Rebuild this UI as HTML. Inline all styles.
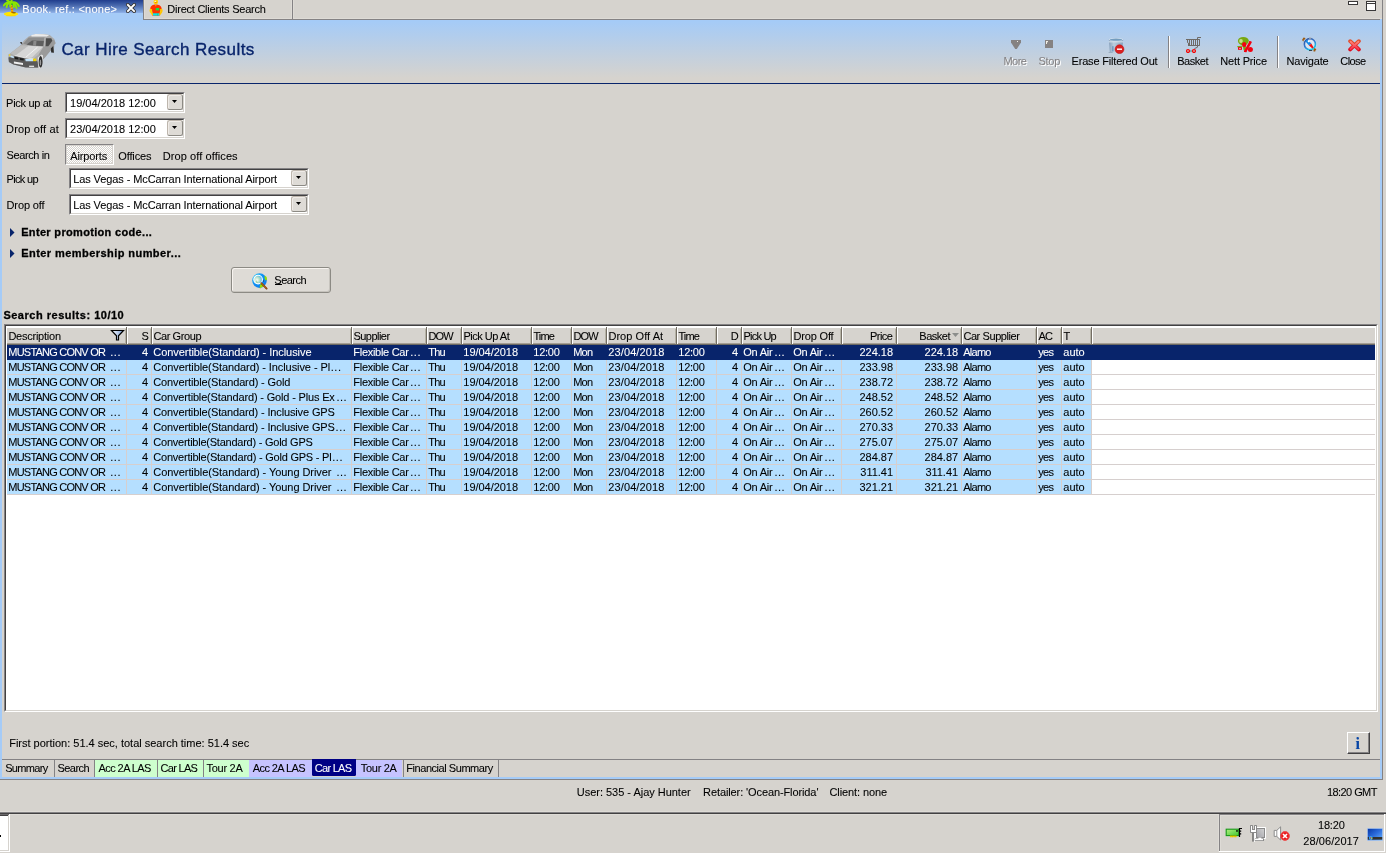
<!DOCTYPE html>
<html><head><meta charset="utf-8"><title>Car Hire Search Results</title>
<style>
html,body{margin:0;padding:0}
body{width:1386px;height:853px;background:#D6D3CE;position:relative;overflow:hidden;font-family:'Liberation Sans',sans-serif;font-size:11px}
div,span,svg{position:absolute;display:block}
span{white-space:pre;-webkit-text-stroke:0.08px}
</style></head>
<body>
<div style="left:0px;top:0px;width:143px;height:20px;background:linear-gradient(#213C8C 0px,#31519C 2.5px,#4A69AD 5.5px,#6386C6 8.5px,#7B9ED6 11px,#8CAEE7 12.6px,#A5CBF7 13.2px);"></div>
<div style="left:144px;top:18px;width:1238px;height:1px;background:#DEDBD6;"></div>
<div style="left:144px;top:0px;width:1px;height:18px;background:#DEDBD6;"></div>
<div style="left:291px;top:0px;width:1px;height:18px;background:#DEDBD6;"></div>
<div style="left:293px;top:0px;width:1px;height:18px;background:#DEDBD6;"></div>
<div style="left:143px;top:0px;width:1px;height:20px;background:#848284;"></div>
<div style="left:144px;top:19px;width:1239px;height:1px;background:#848284;"></div>
<div style="left:292px;top:0px;width:1px;height:19px;background:#848284;"></div>
<svg style="left:3px;top:0px" width="17" height="17" viewBox="0 0 17 17">
<ellipse cx="8" cy="14" rx="7.2" ry="2.2" fill="#FFE600"/>
<rect x="3.3" y="14.8" width="9.2" height="1.4" fill="#FFD800"/>
<path d="M7.6 3.5C8.2 7 9.4 9 9.2 13" stroke="#F6B000" stroke-width="2.3" fill="none"/>
<path d="M7.6 3.5C8.2 7 9.4 9 9.2 13" stroke="#C85A00" stroke-width="2.3" fill="none" stroke-dasharray="1.1 1.7" opacity="0.75"/>
<ellipse cx="11" cy="12.7" rx="2" ry="0.8" fill="#7A4A00" opacity="0.8"/>
<g stroke="#8CE600" stroke-width="2" fill="none" stroke-linecap="round">
<path d="M8 2.6C5.5 1.6 2.5 3 0.8 5.5"/>
<path d="M8 2.6C5.5 2.6 4 4.5 3.6 7.2"/>
<path d="M8 2.6C7 4 7 5.5 7.2 6.6"/>
<path d="M8 2.6C10.5 3 11 5.5 10.8 7"/>
<path d="M8 2.6C11 2.5 13 5 13.5 8.2"/>
<path d="M8 2.6C11.5 1.6 14.5 3.4 15.8 6"/>
<path d="M8 2.6L4.2 0.4"/><path d="M8 2.6L8.6 0.4"/>
</g>
<circle cx="9" cy="4.2" r="0.9" fill="#30C020"/>
</svg>
<svg style="left:126px;top:3px" width="10" height="10" viewBox="0 0 10 10">
<path d="M1.8 1.8L8.2 8.2M8.2 1.8L1.8 8.2" stroke="#303030" stroke-width="3.6" stroke-linecap="square" fill="none"/>
<path d="M1.9 1.9L8.1 8.1M8.1 1.9L1.9 8.1" stroke="#fff" stroke-width="1.9" stroke-linecap="square" fill="none"/>
</svg>
<svg style="left:149px;top:0px" width="15" height="17" viewBox="0 0 15 17">
<path d="M5.4 0L6.6 0L7.2 1L7.8 0L8.4 0L8 1.2z" fill="#F8A000"/>
<circle cx="6.8" cy="1.9" r="2.3" fill="#FFD400"/>
<ellipse cx="6.9" cy="2.4" rx="1" ry="0.6" fill="#FF8000"/>
<ellipse cx="6.3" cy="1.2" rx="0.9" ry="0.5" fill="#fff"/>
<path d="M1.2 9.5C1 6.5 3.5 4.8 5.8 4.6L7.8 4.6C10.5 4.8 12.8 6.5 12.8 9.5L11 11L10.6 15.8L3.4 15.8L3.2 11z" fill="#FF3400"/>
<path d="M1.4 8.6C0.2 9.8 0.4 11 1 12.2L3.2 15.4L4 14.2L3 11.4L3.2 9.4z" fill="#FFD400"/>
<path d="M12.6 8.6C14 9.8 13.8 11 13.2 12.2L11 15.4L10.2 14.2L11.2 11.4L11 9.4z" fill="#FFC400"/>
<path d="M6.4 4.6L7.4 4.6L7.2 6.2L6.6 6.2z" fill="#FFD400"/>
<rect x="6.8" y="8" width="3.4" height="2.4" fill="#18E040"/>
<rect x="4" y="13.3" width="6.2" height="2.3" fill="#00E8E8"/>
<rect x="8.3" y="13.3" width="0.6" height="2.3" fill="#20C080"/>
</svg>
<div style="left:1348px;top:1px;width:10px;height:4px;box-sizing:border-box;background:#fff;border:1px solid #393839;"></div>
<div style="left:1366px;top:1px;width:10px;height:10px;box-sizing:border-box;background:#fff;border:1px solid #393839;"></div>
<div style="left:1367px;top:3px;width:8px;height:1px;background:#393839;"></div>
<div style="left:1382px;top:0px;width:1px;height:780px;background:#848284;"></div>
<div style="left:0px;top:779px;width:1383px;height:1px;background:#848284;"></div>
<div style="left:2px;top:20px;width:1378px;height:63px;background:linear-gradient(#A5CBF7 0%,#A5CBF7 2%,#D6D3CE 92%);"></div>
<div style="left:2px;top:83px;width:1378px;height:1px;background:#08246B;"></div>
<div style="left:0px;top:19px;width:2px;height:760px;background:#A5CBF7;"></div>
<div style="left:1380px;top:19px;width:2px;height:760px;background:#A5CBF7;"></div>
<div style="left:0px;top:777px;width:1382px;height:2px;background:#A5CBF7;"></div>
<svg style="left:8px;top:33px" width="48" height="37" viewBox="0 0 48 37">
<defs><linearGradient id="cb" x1="0" y1="0" x2="1" y2="1"><stop offset="0" stop-color="#D2D2D2"/><stop offset="1" stop-color="#8E8E8E"/></linearGradient></defs>
<path d="M0.4 24.6L0.9 29L5.4 31.5L17.7 34.4L30.5 34.9L32 35.9L33.9 31.5L34.9 26.6L36.9 24.6L43.3 16.7L45.8 19.7L46.2 11.8L47.7 10.3L46.2 5.9L41.8 1.9L35.9 1L27.5 0.9L20.6 3.4L15.7 7.8L13.2 11.8L2.4 20.2L0.4 21.6z" fill="#ABABAB"/>
<path d="M23.1 2.2L27.5 0.9L35.9 1.2L41.3 1.9L38.9 3.6L23.6 3.6z" fill="#ECECEC"/>
<path d="M35.4 13.7L46 6.5L47.5 10.3L46.2 11.8L45.8 19.7L43.3 16.7L36.9 24.6L34.9 26.6L30.5 21.6z" fill="#9A9A9A"/>
<path d="M15.2 10.8L20.6 4.6L36.8 4.6L35.4 13.3L21.6 12.3z" fill="#8C8C8C"/>
<path d="M18.5 11.5L24 7.5L35.8 8L35.4 13.3L21.6 12.3z" fill="#5E5E5E"/>
<path d="M25.5 8L28.5 8L28 12.8L25 12.6z" fill="#8A8A8A"/>
<path d="M37.6 5.2L43.3 5.2L44.4 7.8L40.3 13.3L37.4 13.3z" fill="#4C4C4C"/>
<path d="M36.4 4.6L37.8 4.6L37.2 13.6L35.6 13.6z" fill="#B4B4B4"/>
<path d="M2.4 20.2L13.2 12.3L35.4 13.7L30.5 21.6L25.6 25.6L17.7 25.6L6.8 22.8z" fill="#BDBDBD"/>
<path d="M7.5 22.5L20.5 12.8L35 13.7L24 24.5L17.7 25.4z" fill="#D6D6D6"/>
<path d="M17.8 24.2L29.5 14.2" stroke="#F4F4F4" stroke-width="0.9" fill="none"/>
<path d="M6.8 22.6L17.7 25.4L25.6 25.8" stroke="#F0F0F0" stroke-width="0.8" fill="none"/>
<path d="M0.4 24.6L6.8 23.1L17.7 25.6L25.6 26.6L29.5 28.5L30.5 34.6L17.7 34.4L5.4 31.5L0.9 29z" fill="#5A5A5A"/>
<path d="M17.2 26.1L25.1 26.1L25.1 28.2L17.7 28.2z" fill="#C4E4FA"/>
<path d="M2.4 22.4L5.9 23.6L5.9 25.3L2.4 24.3z" fill="#C4E4FA"/>
<path d="M25.1 25.6L28.2 25.6L28.2 28.2L25.1 28.2z" fill="#F2D400"/>
<path d="M0.9 21.1L2.3 21.1L2.3 23.3L0.9 23.3z" fill="#E8D040"/>
<path d="M6.8 24.1L10.3 24.6L10.3 26.6L6.8 26.1z" fill="#1A1A1A"/>
<path d="M11.8 25.1L15.7 25.6L15.7 27.6L11.8 27.1z" fill="#1A1A1A"/>
<path d="M5.9 28.5L15 30L15 32L5.9 30.5z" fill="#F0F0F0"/>
<path d="M21.1 32.7L26.1 32.7L26.1 33.9L21.1 33.9z" fill="#F0F0F0"/>
<path d="M29.8 24.5L33.5 21.5L35 22.5L34.9 26.6L33.9 31.5L32 35.9L30.5 34.9z" fill="#E4E4E4"/>
<ellipse cx="32.6" cy="28.8" rx="1.9" ry="5.8" fill="#2C2C2C"/>
<ellipse cx="32.4" cy="29.4" rx="0.8" ry="3" fill="#9A9A9A"/>
<path d="M42.8 15.6L45.2 13L45.9 19.7L43.2 19.6z" fill="#2E2E2E"/>
<path d="M12 9.1L14 9.1L14.3 11.4L12.8 10.8z" fill="#444"/>
</svg>
<div style="left:1168px;top:36px;width:1px;height:32px;background:#848284;"></div>
<div style="left:1169px;top:36px;width:1px;height:32px;background:#fff;"></div>
<div style="left:1277px;top:36px;width:1px;height:32px;background:#848284;"></div>
<div style="left:1278px;top:36px;width:1px;height:32px;background:#fff;"></div>
<svg style="left:1011px;top:40px" width="10" height="9" viewBox="0 0 10 9">
<path d="M0 0h10v2.6L5.8 9H4.2L0 2.6z" fill="#858282"/>
<rect x="6" y="1" width="1" height="1" fill="#F0EEE6"/>
</svg>
<svg style="left:1045px;top:40px" width="8" height="8" viewBox="0 0 8 8">
<rect width="8" height="8" fill="#858282"/>
<path d="M1 1h2v1.2h-1V4H1z" fill="#F0EEE6"/>
</svg>
<svg style="left:1108px;top:38px" width="17" height="16" viewBox="0 0 17 16">
<defs><linearGradient id="bk" x1="0" y1="0" x2="1" y2="0"><stop offset="0" stop-color="#869FBA"/><stop offset="0.35" stop-color="#BCCEDE"/><stop offset="1" stop-color="#86A2BE"/></linearGradient></defs>
<path d="M0.8 1.6L15.2 1.6L14.2 14.6L1.8 14.6z" fill="url(#bk)"/>
<path d="M0.8 3.2h14.4v1.2H0.8z" fill="#D6E2EC" opacity="0.9"/>
<ellipse cx="8" cy="1.6" rx="7.2" ry="1.6" fill="#D5E3F0"/>
<ellipse cx="8" cy="1.7" rx="6.2" ry="1.15" fill="#739CBE"/>
<rect x="4.4" y="8.2" width="1" height="5.2" fill="#4F86B8"/>
<rect x="0.6" y="14" width="4" height="1" fill="#9AAFC2"/>
<circle cx="11.5" cy="11.2" r="4.4" fill="#DC2020"/>
<circle cx="11.5" cy="11.2" r="4.4" fill="none" stroke="#B81414" stroke-width="0.6"/>
<rect x="9" y="10.5" width="5" height="1.4" fill="#fff"/>
</svg>
<svg style="left:1185px;top:36px" width="17" height="17" viewBox="0 0 17 17">
<g stroke="#6E6A66" stroke-width="1" fill="none">
<path d="M16 1.5H12.5V11.2L9.4 12.6"/>
<path d="M1 3.5H14.8"/>
<path d="M3 9.5H14.8"/>
<path d="M2.5 3.5V6.8M4.5 3.5V9.5M6.5 3.5V9.5M8.5 3.5V9.5M10.5 3.5V9.5M14.5 3.5V9.5"/>
<path d="M3.5 6.8V9.5"/>
</g>
<path d="M3 15h6" stroke="#409090" stroke-width="1"/>
<circle cx="3" cy="15" r="1.45" fill="#C8F8F8" stroke="#F40000" stroke-width="1.25"/>
<circle cx="9" cy="15" r="1.45" fill="#C8F8F8" stroke="#F40000" stroke-width="1.25"/>
</svg>
<svg style="left:1237px;top:36px" width="17" height="17" viewBox="0 0 17 17">
<ellipse cx="6.3" cy="5" rx="5.4" ry="4.1" fill="#78A810"/>
<path d="M9 3.2L12 4.6L9.6 6.2z" fill="#78A810"/>
<ellipse cx="4" cy="5" rx="1.8" ry="2" fill="#C4E08C"/>
<path d="M5.5 8L6.6 14.2L9 13.6L8.6 8z" fill="#78A810"/>
<path d="M0.2 10.2L5.6 9.6L5.6 10.8L0.2 11.2z" fill="#78A810"/>
<rect x="1" y="11.1" width="4" height="2.7" fill="#F20010"/>
<rect x="2" y="12.1" width="2" height="0.7" fill="#F8C8C8"/>
<ellipse cx="7.2" cy="8.6" rx="2.2" ry="2.5" fill="#F20010"/>
<ellipse cx="13.4" cy="13.4" rx="2.5" ry="2.5" fill="#F20010"/>
<path d="M13.6 5.8L8 15.9" stroke="#F20010" stroke-width="2.6"/>
<rect x="12" y="5.2" width="2.4" height="1.8" fill="#F20010"/>
<rect x="7" y="14.6" width="2.4" height="1.4" fill="#F20010"/>
</svg>
<svg style="left:1301px;top:36px" width="17" height="17" viewBox="0 0 17 17">
<defs><linearGradient id="nr" x1="0" y1="0" x2="0.6" y2="1"><stop offset="0" stop-color="#2C4C94"/><stop offset="0.55" stop-color="#3478D0"/><stop offset="1" stop-color="#18CCEC"/></linearGradient></defs>
<circle cx="8.9" cy="8.4" r="6.6" fill="#F4F4F6" opacity="0.9"/>
<circle cx="8.9" cy="8.2" r="5.6" fill="#DCE6F0" stroke="url(#nr)" stroke-width="1.7"/>
<path d="M8 1.6h2.2v1.2H8z" fill="#A8A8A8"/>
<path d="M4.3 5.2L6.2 3.7L10.3 7.5L8 9.6z" fill="#1088E8"/>
<path d="M10.3 7.5L8 9.6L11.4 12.6L12.6 11.6z" fill="#F01010"/>
<circle cx="7.6" cy="5.4" r="0.9" fill="#fff"/>
<path d="M1.2 3.6L2.6 1.4L4.4 2L4 3.4L2.8 3.8L2.6 5.4L1.6 5z" fill="#9A5A10"/>
<path d="M12.4 13.6L13.6 12L15.4 13.2L14.6 14.2L14.2 15.6L12.6 15.6z" fill="#9A5A10"/>
<path d="M8 14.2h3.2v0.8H8z" fill="#202028"/>
</svg>
<svg style="left:1348px;top:39px" width="13" height="13" viewBox="0 0 13 13">
<defs><linearGradient id="cx" x1="0" y1="0" x2="0" y2="1"><stop offset="0" stop-color="#E0502E"/><stop offset="1" stop-color="#DE0C1C"/></linearGradient>
<linearGradient id="cy" x1="0" y1="0" x2="0" y2="1"><stop offset="0" stop-color="#FF8478"/><stop offset="1" stop-color="#F8304C"/></linearGradient></defs>
<path d="M2.2 2.2L10.8 10.4M10.8 2.2L2.2 10.4" stroke="url(#cx)" stroke-width="3.9" stroke-linecap="round" fill="none"/>
<path d="M2.6 2.7L10.4 10M10.4 2.7L2.6 10" stroke="url(#cy)" stroke-width="1.9" stroke-linecap="round" fill="none"/>
</svg>
<div style="left:65px;top:92px;width:120px;height:21px;box-sizing:border-box;background:#fff;border:1px solid;border-color:#848284 #fff #fff #848284;"></div>
<div style="left:66px;top:93px;width:118px;height:19px;box-sizing:border-box;border:1px solid;border-color:#424142 #D6D3CE #D6D3CE #424142;"></div>
<div style="left:167px;top:94px;width:16px;height:16px;box-sizing:border-box;background:#DEDBD6;border:1px solid;border-color:#BDB6AD #8C8A84 #8C8A84 #BDB6AD;border-radius:2.5px;box-shadow:inset 1px 1px 0 #EFEBE7;"></div>
<svg style="left:172px;top:100px" width="5" height="3" viewBox="0 0 5 3"><path d="M0 0h5L2.5 3z" fill="#000"/></svg>
<div style="left:65px;top:118px;width:120px;height:21px;box-sizing:border-box;background:#fff;border:1px solid;border-color:#848284 #fff #fff #848284;"></div>
<div style="left:66px;top:119px;width:118px;height:19px;box-sizing:border-box;border:1px solid;border-color:#424142 #D6D3CE #D6D3CE #424142;"></div>
<div style="left:167px;top:120px;width:16px;height:16px;box-sizing:border-box;background:#DEDBD6;border:1px solid;border-color:#BDB6AD #8C8A84 #8C8A84 #BDB6AD;border-radius:2.5px;box-shadow:inset 1px 1px 0 #EFEBE7;"></div>
<svg style="left:172px;top:126px" width="5" height="3" viewBox="0 0 5 3"><path d="M0 0h5L2.5 3z" fill="#000"/></svg>
<div style="left:69px;top:168px;width:240px;height:21px;box-sizing:border-box;background:#fff;border:1px solid;border-color:#848284 #fff #fff #848284;"></div>
<div style="left:70px;top:169px;width:238px;height:19px;box-sizing:border-box;border:1px solid;border-color:#424142 #D6D3CE #D6D3CE #424142;"></div>
<div style="left:291px;top:170px;width:16px;height:16px;box-sizing:border-box;background:#DEDBD6;border:1px solid;border-color:#BDB6AD #8C8A84 #8C8A84 #BDB6AD;border-radius:2.5px;box-shadow:inset 1px 1px 0 #EFEBE7;"></div>
<svg style="left:296px;top:176px" width="5" height="3" viewBox="0 0 5 3"><path d="M0 0h5L2.5 3z" fill="#000"/></svg>
<div style="left:69px;top:194px;width:240px;height:21px;box-sizing:border-box;background:#fff;border:1px solid;border-color:#848284 #fff #fff #848284;"></div>
<div style="left:70px;top:195px;width:238px;height:19px;box-sizing:border-box;border:1px solid;border-color:#424142 #D6D3CE #D6D3CE #424142;"></div>
<div style="left:291px;top:196px;width:16px;height:16px;box-sizing:border-box;background:#DEDBD6;border:1px solid;border-color:#BDB6AD #8C8A84 #8C8A84 #BDB6AD;border-radius:2.5px;box-shadow:inset 1px 1px 0 #EFEBE7;"></div>
<svg style="left:296px;top:202px" width="5" height="3" viewBox="0 0 5 3"><path d="M0 0h5L2.5 3z" fill="#000"/></svg>
<div style="left:65px;top:144px;width:49px;height:21px;box-sizing:border-box;border:1px solid;border-color:#848284 #fff #fff #848284;"></div>
<div style="left:67px;top:146px;width:45px;height:17px;background:conic-gradient(#fff 25%,#D6D3CE 0 50%,#fff 0 75%,#D6D3CE 0) 0 0/2px 2px;"></div>
<svg style="left:10px;top:228px" width="5" height="9" viewBox="0 0 5 9"><path d="M0 0L4.5 4.5L0 9z" fill="#08246B"/></svg>
<svg style="left:10px;top:249px" width="5" height="9" viewBox="0 0 5 9"><path d="M0 0L4.5 4.5L0 9z" fill="#08246B"/></svg>
<div style="left:231px;top:267px;width:100px;height:26px;box-sizing:border-box;border:1px solid #8C8A84;border-radius:3px;background:#DEDBD6;box-shadow:inset 1px 1px 0 #F7F3EF,inset -1px -1px 0 #C6C3BD;"></div>
<svg style="left:252px;top:273px" width="17" height="17" viewBox="0 0 17 17">
<defs><radialGradient id="sg" cx="0.3" cy="0.3" r="0.9"><stop offset="0" stop-color="#30D8FA"/><stop offset="0.5" stop-color="#1090F4"/><stop offset="1" stop-color="#0C70E8"/></radialGradient>
<radialGradient id="sl" cx="0.35" cy="0.55" r="0.7"><stop offset="0" stop-color="#fff"/><stop offset="0.45" stop-color="#B8E0C8"/><stop offset="1" stop-color="#38A8F0"/></radialGradient></defs>
<circle cx="7.5" cy="7.6" r="7.3" fill="url(#sg)"/>
<path d="M12.6 2.6L14.6 4L15 7L13.6 7.6L12.6 5.6z" fill="#98E000"/>
<path d="M8.2 11.6L10.6 10.4L11.6 11.6L10.8 14L8.8 14.6L8.6 15.6L7.6 15.2z" fill="#98E000"/>
<path d="M11.4 6.4L12 8.2L11.4 9z" fill="#101820"/>
<circle cx="6.1" cy="6.6" r="4.3" fill="url(#sl)" stroke="#fff" stroke-width="1.1"/>
<path d="M3.8 5.4L4.6 8.6L6 9.6L4.4 9.4z" fill="#48A848" opacity="0.7"/>
<path d="M9.4 10.2L14.6 15.6" stroke="#7A3A08" stroke-width="1.9" stroke-linecap="round"/>
<path d="M9.6 10.2L14.4 15.2" stroke="#D07828" stroke-width="0.8" stroke-linecap="round"/>
</svg>
<div style="left:275px;top:284px;width:7px;height:1px;background:#000;"></div>
<div style="left:4px;top:324px;width:1374px;height:388px;box-sizing:border-box;background:#fff;border:1px solid;border-color:#848284 #fff #fff #848284;"></div>
<div style="left:5px;top:325px;width:1372px;height:386px;box-sizing:border-box;border:1px solid;border-color:#424142 #D6D3CE #D6D3CE #424142;"></div>
<div style="left:7px;top:328px;width:1368px;height:15px;background:#D6D3CE;"></div>
<div style="left:7px;top:343px;width:1368px;height:1px;background:#A59E94;"></div>
<div style="left:7px;top:344px;width:1368px;height:1px;background:#6B6963;"></div>
<div style="left:125px;top:329px;width:1px;height:15px;background:#B5B2A5;"></div>
<div style="left:126px;top:327px;width:1px;height:18px;background:#736D63;"></div>
<div style="left:127px;top:327px;width:1px;height:17px;background:#fff;"></div>
<div style="left:150px;top:329px;width:1px;height:15px;background:#B5B2A5;"></div>
<div style="left:151px;top:327px;width:1px;height:18px;background:#736D63;"></div>
<div style="left:152px;top:327px;width:1px;height:17px;background:#fff;"></div>
<div style="left:350px;top:329px;width:1px;height:15px;background:#B5B2A5;"></div>
<div style="left:351px;top:327px;width:1px;height:18px;background:#736D63;"></div>
<div style="left:352px;top:327px;width:1px;height:17px;background:#fff;"></div>
<div style="left:425px;top:329px;width:1px;height:15px;background:#B5B2A5;"></div>
<div style="left:426px;top:327px;width:1px;height:18px;background:#736D63;"></div>
<div style="left:427px;top:327px;width:1px;height:17px;background:#fff;"></div>
<div style="left:460px;top:329px;width:1px;height:15px;background:#B5B2A5;"></div>
<div style="left:461px;top:327px;width:1px;height:18px;background:#736D63;"></div>
<div style="left:462px;top:327px;width:1px;height:17px;background:#fff;"></div>
<div style="left:530px;top:329px;width:1px;height:15px;background:#B5B2A5;"></div>
<div style="left:531px;top:327px;width:1px;height:18px;background:#736D63;"></div>
<div style="left:532px;top:327px;width:1px;height:17px;background:#fff;"></div>
<div style="left:570px;top:329px;width:1px;height:15px;background:#B5B2A5;"></div>
<div style="left:571px;top:327px;width:1px;height:18px;background:#736D63;"></div>
<div style="left:572px;top:327px;width:1px;height:17px;background:#fff;"></div>
<div style="left:605px;top:329px;width:1px;height:15px;background:#B5B2A5;"></div>
<div style="left:606px;top:327px;width:1px;height:18px;background:#736D63;"></div>
<div style="left:607px;top:327px;width:1px;height:17px;background:#fff;"></div>
<div style="left:675px;top:329px;width:1px;height:15px;background:#B5B2A5;"></div>
<div style="left:676px;top:327px;width:1px;height:18px;background:#736D63;"></div>
<div style="left:677px;top:327px;width:1px;height:17px;background:#fff;"></div>
<div style="left:715px;top:329px;width:1px;height:15px;background:#B5B2A5;"></div>
<div style="left:716px;top:327px;width:1px;height:18px;background:#736D63;"></div>
<div style="left:717px;top:327px;width:1px;height:17px;background:#fff;"></div>
<div style="left:740px;top:329px;width:1px;height:15px;background:#B5B2A5;"></div>
<div style="left:741px;top:327px;width:1px;height:18px;background:#736D63;"></div>
<div style="left:742px;top:327px;width:1px;height:17px;background:#fff;"></div>
<div style="left:790px;top:329px;width:1px;height:15px;background:#B5B2A5;"></div>
<div style="left:791px;top:327px;width:1px;height:18px;background:#736D63;"></div>
<div style="left:792px;top:327px;width:1px;height:17px;background:#fff;"></div>
<div style="left:840px;top:329px;width:1px;height:15px;background:#B5B2A5;"></div>
<div style="left:841px;top:327px;width:1px;height:18px;background:#736D63;"></div>
<div style="left:842px;top:327px;width:1px;height:17px;background:#fff;"></div>
<div style="left:895px;top:329px;width:1px;height:15px;background:#B5B2A5;"></div>
<div style="left:896px;top:327px;width:1px;height:18px;background:#736D63;"></div>
<div style="left:897px;top:327px;width:1px;height:17px;background:#fff;"></div>
<div style="left:960px;top:329px;width:1px;height:15px;background:#B5B2A5;"></div>
<div style="left:961px;top:327px;width:1px;height:18px;background:#736D63;"></div>
<div style="left:962px;top:327px;width:1px;height:17px;background:#fff;"></div>
<div style="left:1035px;top:329px;width:1px;height:15px;background:#B5B2A5;"></div>
<div style="left:1036px;top:327px;width:1px;height:18px;background:#736D63;"></div>
<div style="left:1037px;top:327px;width:1px;height:17px;background:#fff;"></div>
<div style="left:1060px;top:329px;width:1px;height:15px;background:#B5B2A5;"></div>
<div style="left:1061px;top:327px;width:1px;height:18px;background:#736D63;"></div>
<div style="left:1062px;top:327px;width:1px;height:17px;background:#fff;"></div>
<div style="left:1090px;top:329px;width:1px;height:15px;background:#B5B2A5;"></div>
<div style="left:1091px;top:327px;width:1px;height:18px;background:#736D63;"></div>
<div style="left:1092px;top:327px;width:1px;height:17px;background:#fff;"></div>
<svg style="left:110px;top:329px" width="15" height="12" viewBox="0 0 15 12"><defs><linearGradient id="fg" x1="0" y1="0" x2="1" y2="0"><stop offset="0" stop-color="#fff"/><stop offset="1" stop-color="#7B9ED6"/></linearGradient></defs><path d="M1.5 1.5h12L8.5 6.8v4.2h-2V6.8z" fill="url(#fg)" stroke="#000" stroke-width="1.2" stroke-linejoin="miter"/></svg>
<svg style="left:952px;top:333px" width="7" height="4" viewBox="0 0 7 4"><path d="M0 0h7L3.5 4z" fill="#8C8E8C"/></svg>
<div style="left:7px;top:360px;width:1085px;height:135px;background:#B5DFFF;"></div>
<div style="left:7px;top:374px;width:1368px;height:1px;background:#D6CFCE;"></div>
<div style="left:7px;top:389px;width:1368px;height:1px;background:#D6CFCE;"></div>
<div style="left:7px;top:404px;width:1368px;height:1px;background:#D6CFCE;"></div>
<div style="left:7px;top:419px;width:1368px;height:1px;background:#D6CFCE;"></div>
<div style="left:7px;top:434px;width:1368px;height:1px;background:#D6CFCE;"></div>
<div style="left:7px;top:449px;width:1368px;height:1px;background:#D6CFCE;"></div>
<div style="left:7px;top:464px;width:1368px;height:1px;background:#D6CFCE;"></div>
<div style="left:7px;top:479px;width:1368px;height:1px;background:#D6CFCE;"></div>
<div style="left:7px;top:494px;width:1368px;height:1px;background:#D6CFCE;"></div>
<div style="left:126px;top:360px;width:1px;height:135px;background:#D6CFCE;"></div>
<div style="left:151px;top:360px;width:1px;height:135px;background:#D6CFCE;"></div>
<div style="left:351px;top:360px;width:1px;height:135px;background:#D6CFCE;"></div>
<div style="left:426px;top:360px;width:1px;height:135px;background:#D6CFCE;"></div>
<div style="left:461px;top:360px;width:1px;height:135px;background:#D6CFCE;"></div>
<div style="left:531px;top:360px;width:1px;height:135px;background:#D6CFCE;"></div>
<div style="left:571px;top:360px;width:1px;height:135px;background:#D6CFCE;"></div>
<div style="left:606px;top:360px;width:1px;height:135px;background:#D6CFCE;"></div>
<div style="left:676px;top:360px;width:1px;height:135px;background:#D6CFCE;"></div>
<div style="left:716px;top:360px;width:1px;height:135px;background:#D6CFCE;"></div>
<div style="left:741px;top:360px;width:1px;height:135px;background:#D6CFCE;"></div>
<div style="left:791px;top:360px;width:1px;height:135px;background:#D6CFCE;"></div>
<div style="left:841px;top:360px;width:1px;height:135px;background:#D6CFCE;"></div>
<div style="left:896px;top:360px;width:1px;height:135px;background:#D6CFCE;"></div>
<div style="left:961px;top:360px;width:1px;height:135px;background:#D6CFCE;"></div>
<div style="left:1036px;top:360px;width:1px;height:135px;background:#D6CFCE;"></div>
<div style="left:1061px;top:360px;width:1px;height:135px;background:#D6CFCE;"></div>
<div style="left:1091px;top:360px;width:1px;height:135px;background:#D6CFCE;"></div>
<div style="left:7px;top:345px;width:1368px;height:15px;background:#08246B;"></div>
<div style="left:1347px;top:732px;width:23px;height:22px;box-sizing:border-box;background:#D6D3CE;border:1px solid;border-color:#fff #424142 #424142 #fff;box-shadow:inset -1px -1px 0 #848284;"></div>
<div style="left:2px;top:759px;width:1378px;height:1px;background:#848284;"></div>
<div style="left:95px;top:760px;width:62px;height:17px;background:#CEFFCE;"></div>
<div style="left:158px;top:760px;width:45px;height:17px;background:#CEFFCE;"></div>
<div style="left:204px;top:760px;width:45px;height:17px;background:#CEFFCE;"></div>
<div style="left:249px;top:760px;width:63px;height:17px;background:#C6C3FF;"></div>
<div style="left:312px;top:759px;width:44px;height:17px;background:#000084;border-radius:0 0 1.5px 1.5px;"></div>
<div style="left:356px;top:760px;width:46px;height:17px;background:#C6C3FF;"></div>
<div style="left:54px;top:760px;width:1px;height:17px;background:#848284;"></div>
<div style="left:94px;top:760px;width:1px;height:17px;background:#848284;"></div>
<div style="left:157px;top:760px;width:1px;height:17px;background:#848284;"></div>
<div style="left:203px;top:760px;width:1px;height:17px;background:#848284;"></div>
<div style="left:403px;top:760px;width:1px;height:17px;background:#848284;"></div>
<div style="left:498px;top:760px;width:1px;height:17px;background:#848284;"></div>
<div style="left:0px;top:812px;width:1386px;height:1px;background:#848284;"></div>
<div style="left:0px;top:813px;width:1386px;height:1px;background:#424142;"></div>
<div style="left:0px;top:816px;width:8px;height:34px;background:#fff;"></div>
<div style="left:0px;top:814px;width:9px;height:1px;background:#6B696B;"></div>
<div style="left:0px;top:815px;width:8px;height:1px;background:#424142;"></div>
<div style="left:8px;top:815px;width:1px;height:36px;background:#D6D3CE;"></div>
<div style="left:0px;top:850px;width:9px;height:1px;background:#D6D3CE;"></div>
<div style="left:9px;top:814px;width:1px;height:38px;background:#fff;"></div>
<div style="left:0px;top:851px;width:10px;height:1px;background:#fff;"></div>
<div style="left:0px;top:835px;width:1px;height:2px;background:#000;"></div>
<div style="left:0px;top:811px;width:1386px;height:1px;background:#DEDBD6;"></div>
<div style="left:10px;top:814px;width:1208px;height:1px;background:#DEDBD6;"></div>
<div style="left:1218px;top:814px;width:1px;height:38px;background:#DEDBD6;"></div>
<div style="left:1219px;top:814px;width:166px;height:1px;background:#848284;"></div>
<div style="left:1219px;top:814px;width:1px;height:38px;background:#848284;"></div>
<div style="left:1220px;top:815px;width:164px;height:1px;background:#DEDBD6;"></div>
<div style="left:1220px;top:815px;width:1px;height:36px;background:#DEDBD6;"></div>
<div style="left:1384px;top:814px;width:1px;height:38px;background:#fff;"></div>
<div style="left:1219px;top:851px;width:166px;height:1px;background:#fff;"></div>
<svg style="left:1225px;top:827px" width="18" height="11" viewBox="0 0 18 11">
<defs><linearGradient id="ng" x1="0" y1="0" x2="1" y2="1"><stop offset="0" stop-color="#B0F080"/><stop offset="1" stop-color="#40C830"/></linearGradient></defs>
<rect x="1.2" y="2.2" width="12.6" height="6.4" fill="url(#ng)" stroke="#189818" stroke-width="1.1"/>
<rect x="5" y="8.6" width="6.6" height="1.6" fill="#F0D800"/>
<path d="M5.9 8.6v1.6M7.5 8.6v1.6M9.1 8.6v1.6M10.7 8.6v1.6" stroke="#C8A800" stroke-width="0.5"/>
<circle cx="12" cy="3.9" r="0.9" fill="#000"/>
<path d="M17 1.5H14.5V10M14.5 4.2H16.2M14.5 6.8H16.2" stroke="#000" stroke-width="1.2" fill="none"/>
</svg>
<svg style="left:1250px;top:825px" width="17" height="17" viewBox="0 0 17 17">
<defs><linearGradient id="pg" x1="1" y1="0" x2="0" y2="1"><stop offset="0" stop-color="#D0D0D0"/><stop offset="1" stop-color="#A4A4AA"/></linearGradient></defs>
<rect x="4.6" y="2" width="11.4" height="12" rx="0.8" fill="#fff"/>
<rect x="6" y="3" width="9" height="10" fill="#8A8A8A"/>
<rect x="7" y="4" width="7" height="8" fill="url(#pg)"/>
<rect x="4" y="13.4" width="10" height="2.6" fill="#8A8A8A"/>
<rect x="5" y="14" width="8" height="1.2" fill="#fff"/>
<rect x="8.4" y="12.6" width="3" height="1.4" fill="#fff"/>
<path d="M0 0.6Q0 0 0.8 0H2.2Q3 0 3 0.6V4H4V0.6Q4 0 4.8 0H6.2Q7 0 7 0.6V7Q7 8 6 8H1Q0 8 0 7z" fill="#8A8A8A"/>
<path d="M1 1H2V5H5V1H6V7H1z" fill="#fff"/>
<rect x="2.4" y="8" width="1.4" height="8.6" fill="#505050"/>
<rect x="3.8" y="8" width="1" height="9" fill="#fff"/>
</svg>
<svg style="left:1273px;top:826px" width="18" height="16" viewBox="0 0 18 16">
<path d="M1.2 4.4H3.8L7.6 0.8V14L3.8 10.4H1.2z" fill="#fff" stroke="#8C8C8C" stroke-width="1" stroke-linejoin="round"/>
<path d="M3.8 4.4V10.4" stroke="#8C8C8C" stroke-width="0.9"/>
<circle cx="12" cy="10" r="4.7" fill="#E81818"/>
<circle cx="12" cy="10" r="4.2" fill="none" stroke="#F46060" stroke-width="0.7"/>
<path d="M10 8L14 12M14 8L10 12" stroke="#fff" stroke-width="1.7"/>
</svg>
<svg style="left:1367px;top:828px" width="16" height="13" viewBox="0 0 16 13">
<defs><linearGradient id="dg" x1="0" y1="0" x2="1" y2="1"><stop offset="0" stop-color="#0838A8"/><stop offset="0.5" stop-color="#2C6CDC"/><stop offset="1" stop-color="#68B0FC"/></linearGradient></defs>
<rect x="0" y="0" width="16" height="13" fill="#B4CAE8"/>
<rect x="0.8" y="0.8" width="14.4" height="11.4" fill="url(#dg)"/>
<rect x="0.8" y="9" width="14.4" height="2.6" fill="#34322C"/>
<circle cx="3.8" cy="10" r="1.9" fill="#3C9CF0"/>
<path d="M3 9.2h1v1H3z" fill="#F03820"/><path d="M4 9.4h1v1H4z" fill="#60D040"/><path d="M3.2 10.2h0.9v0.9h-0.9z" fill="#2060E0"/><path d="M4.1 10.3h1v0.9h-1z" fill="#F8D020"/>
</svg>
<div style="left:0;top:0;width:1386px;height:853px;will-change:transform">
<span style="left:22.30px;top:3px;font-size:11px;line-height:13px;color:#fff;letter-spacing:0.242px;">Book. ref.: &lt;none&gt;</span>
<span style="left:167.30px;top:3px;font-size:11px;line-height:13px;color:#000;letter-spacing:-0.240px;">Direct Clients Search</span>
<span style="left:61.40px;top:40px;font-size:17px;line-height:20px;color:#08246B;letter-spacing:0.437px;-webkit-text-stroke:0.35px #08246B;">Car Hire Search Results</span>
<span style="left:1004.40px;top:56px;font-size:11px;line-height:13px;color:#fff;letter-spacing:-0.515px;">More</span>
<span style="left:1003.40px;top:55px;font-size:11px;line-height:13px;color:#848284;letter-spacing:-0.515px;">More</span>
<span style="left:1039.50px;top:56px;font-size:11px;line-height:13px;color:#fff;letter-spacing:-0.270px;">Stop</span>
<span style="left:1038.50px;top:55px;font-size:11px;line-height:13px;color:#848284;letter-spacing:-0.270px;">Stop</span>
<span style="left:1071.50px;top:55px;font-size:11px;line-height:13px;color:#000;letter-spacing:-0.182px;">Erase Filtered Out</span>
<span style="left:1177.20px;top:55px;font-size:11px;line-height:13px;color:#000;letter-spacing:-0.474px;">Basket</span>
<span style="left:1220.30px;top:55px;font-size:11px;line-height:13px;color:#000;letter-spacing:-0.175px;">Nett Price</span>
<span style="left:1286.50px;top:55px;font-size:11px;line-height:13px;color:#000;letter-spacing:-0.185px;">Navigate</span>
<span style="left:1340.30px;top:55px;font-size:11px;line-height:13px;color:#000;letter-spacing:-0.601px;">Close</span>
<span style="left:6.10px;top:97px;font-size:11px;line-height:13px;color:#000;letter-spacing:-0.305px;">Pick up at</span>
<span style="left:6.10px;top:123px;font-size:11px;line-height:13px;color:#000;letter-spacing:0.160px;">Drop off at</span>
<span style="left:6.50px;top:149px;font-size:11px;line-height:13px;color:#000;letter-spacing:-0.394px;">Search in</span>
<span style="left:6.50px;top:173px;font-size:11px;line-height:13px;color:#000;letter-spacing:-0.676px;">Pick up</span>
<span style="left:6.50px;top:199px;font-size:11px;line-height:13px;color:#000;letter-spacing:-0.111px;">Drop off</span>
<span style="left:70.00px;top:97px;font-size:11px;line-height:13px;color:#000;letter-spacing:0.012px;">19/04/2018 12:00</span>
<span style="left:70.00px;top:123px;font-size:11px;line-height:13px;color:#000;letter-spacing:0.012px;">23/04/2018 12:00</span>
<span style="left:73.20px;top:173px;font-size:11px;line-height:13px;color:#000;letter-spacing:-0.098px;">Las Vegas - McCarran International Airport</span>
<span style="left:73.20px;top:199px;font-size:11px;line-height:13px;color:#000;letter-spacing:-0.098px;">Las Vegas - McCarran International Airport</span>
<span style="left:70.30px;top:150px;font-size:11px;line-height:13px;color:#000;letter-spacing:-0.128px;">Airports</span>
<span style="left:118.30px;top:150px;font-size:11px;line-height:13px;color:#000;letter-spacing:-0.139px;">Offices</span>
<span style="left:162.80px;top:150px;font-size:11px;line-height:13px;color:#000;letter-spacing:0.081px;">Drop off offices</span>
<span style="left:21.20px;top:226px;font-size:11px;line-height:13px;color:#000;font-weight:bold;-webkit-text-stroke:0.3px;letter-spacing:0.328px;">Enter promotion code...</span>
<span style="left:21.20px;top:247px;font-size:11px;line-height:13px;color:#000;font-weight:bold;-webkit-text-stroke:0.3px;letter-spacing:0.441px;">Enter membership number...</span>
<span style="left:274.30px;top:274px;font-size:11px;line-height:13px;color:#000;letter-spacing:-0.507px;">Search</span>
<span style="left:3.40px;top:309px;font-size:11px;line-height:13px;color:#000;font-weight:bold;-webkit-text-stroke:0.3px;letter-spacing:0.513px;">Search results: 10/10</span>
<span style="left:8.40px;top:330px;font-size:11px;line-height:13px;color:#000;letter-spacing:-0.240px;">Description</span>
<span style="left:141.60px;top:330px;font-size:11px;line-height:13px;color:#000;">S</span>
<span style="left:153.40px;top:330px;font-size:11px;line-height:13px;color:#000;letter-spacing:-0.392px;">Car Group</span>
<span style="left:353.40px;top:330px;font-size:11px;line-height:13px;color:#000;letter-spacing:-0.528px;">Supplier</span>
<span style="left:428.40px;top:330px;font-size:11px;line-height:13px;color:#000;letter-spacing:-0.850px;">DOW</span>
<span style="left:463.40px;top:330px;font-size:11px;line-height:13px;color:#000;letter-spacing:-0.488px;">Pick Up At</span>
<span style="left:533.40px;top:330px;font-size:11px;line-height:13px;color:#000;letter-spacing:-0.850px;">Time</span>
<span style="left:573.40px;top:330px;font-size:11px;line-height:13px;color:#000;letter-spacing:-0.850px;">DOW</span>
<span style="left:608.40px;top:330px;font-size:11px;line-height:13px;color:#000;letter-spacing:0.054px;">Drop Off At</span>
<span style="left:678.40px;top:330px;font-size:11px;line-height:13px;color:#000;letter-spacing:-0.850px;">Time</span>
<span style="left:730.80px;top:330px;font-size:11px;line-height:13px;color:#000;">D</span>
<span style="left:743.40px;top:330px;font-size:11px;line-height:13px;color:#000;letter-spacing:-0.763px;">Pick Up</span>
<span style="left:793.40px;top:330px;font-size:11px;line-height:13px;color:#000;letter-spacing:-0.159px;">Drop Off</span>
<span style="left:870.10px;top:330px;font-size:11px;line-height:13px;color:#000;letter-spacing:-0.561px;">Price</span>
<span style="left:919.30px;top:330px;font-size:11px;line-height:13px;color:#000;letter-spacing:-0.474px;">Basket</span>
<span style="left:963.40px;top:330px;font-size:11px;line-height:13px;color:#000;letter-spacing:-0.416px;">Car Supplier</span>
<span style="left:1038.40px;top:330px;font-size:11px;line-height:13px;color:#000;letter-spacing:-0.850px;">AC</span>
<span style="left:1063.40px;top:330px;font-size:11px;line-height:13px;color:#000;">T</span>
<span style="left:8.30px;top:346px;font-size:11px;line-height:13px;color:#fff;letter-spacing:-0.788px;">MUSTANG CONV OR</span>
<span style="left:110.30px;top:346px;font-size:11px;line-height:13px;color:#fff;letter-spacing:0.494px;">...</span>
<span style="left:142.00px;top:346px;font-size:11px;line-height:13px;color:#fff;">4</span>
<span style="left:153.30px;top:346px;font-size:11px;line-height:13px;color:#fff;letter-spacing:-0.061px;">Convertible(Standard) - Inclusive</span>
<span style="left:353.30px;top:346px;font-size:11px;line-height:13px;color:#fff;letter-spacing:-0.284px;">Flexible Car</span>
<span style="left:410.30px;top:346px;font-size:11px;line-height:13px;color:#fff;letter-spacing:0.494px;">...</span>
<span style="left:428.30px;top:346px;font-size:11px;line-height:13px;color:#fff;letter-spacing:-0.818px;">Thu</span>
<span style="left:463.30px;top:346px;font-size:11px;line-height:13px;color:#fff;letter-spacing:-0.037px;">19/04/2018</span>
<span style="left:533.30px;top:346px;font-size:11px;line-height:13px;color:#fff;letter-spacing:-0.252px;">12:00</span>
<span style="left:573.30px;top:346px;font-size:11px;line-height:13px;color:#fff;letter-spacing:-0.850px;">Mon</span>
<span style="left:608.30px;top:346px;font-size:11px;line-height:13px;color:#fff;letter-spacing:0.107px;">23/04/2018</span>
<span style="left:678.30px;top:346px;font-size:11px;line-height:13px;color:#fff;letter-spacing:-0.252px;">12:00</span>
<span style="left:732.00px;top:346px;font-size:11px;line-height:13px;color:#fff;">4</span>
<span style="left:743.30px;top:346px;font-size:11px;line-height:13px;color:#fff;letter-spacing:-0.262px;">On Air</span>
<span style="left:774.40px;top:346px;font-size:11px;line-height:13px;color:#fff;letter-spacing:0.494px;">...</span>
<span style="left:793.30px;top:346px;font-size:11px;line-height:13px;color:#fff;letter-spacing:-0.262px;">On Air</span>
<span style="left:824.60px;top:346px;font-size:11px;line-height:13px;color:#fff;letter-spacing:0.494px;">...</span>
<span style="left:859.50px;top:346px;font-size:11px;line-height:13px;color:#fff;letter-spacing:-0.025px;">224.18</span>
<span style="left:924.60px;top:346px;font-size:11px;line-height:13px;color:#fff;letter-spacing:-0.025px;">224.18</span>
<span style="left:963.30px;top:346px;font-size:11px;line-height:13px;color:#fff;letter-spacing:-0.765px;">Alamo</span>
<span style="left:1038.30px;top:346px;font-size:11px;line-height:13px;color:#fff;letter-spacing:-0.709px;">yes</span>
<span style="left:1063.30px;top:346px;font-size:11px;line-height:13px;color:#fff;letter-spacing:0.003px;">auto</span>
<span style="left:8.30px;top:361px;font-size:11px;line-height:13px;color:#000;letter-spacing:-0.788px;">MUSTANG CONV OR</span>
<span style="left:110.30px;top:361px;font-size:11px;line-height:13px;color:#000;letter-spacing:0.494px;">...</span>
<span style="left:142.00px;top:361px;font-size:11px;line-height:13px;color:#000;">4</span>
<span style="left:153.30px;top:361px;font-size:11px;line-height:13px;color:#000;letter-spacing:-0.078px;">Convertible(Standard) - Inclusive - Pl</span>
<span style="left:330.80px;top:361px;font-size:11px;line-height:13px;color:#000;letter-spacing:0.494px;">...</span>
<span style="left:353.30px;top:361px;font-size:11px;line-height:13px;color:#000;letter-spacing:-0.284px;">Flexible Car</span>
<span style="left:410.30px;top:361px;font-size:11px;line-height:13px;color:#000;letter-spacing:0.494px;">...</span>
<span style="left:428.30px;top:361px;font-size:11px;line-height:13px;color:#000;letter-spacing:-0.818px;">Thu</span>
<span style="left:463.30px;top:361px;font-size:11px;line-height:13px;color:#000;letter-spacing:-0.037px;">19/04/2018</span>
<span style="left:533.30px;top:361px;font-size:11px;line-height:13px;color:#000;letter-spacing:-0.252px;">12:00</span>
<span style="left:573.30px;top:361px;font-size:11px;line-height:13px;color:#000;letter-spacing:-0.850px;">Mon</span>
<span style="left:608.30px;top:361px;font-size:11px;line-height:13px;color:#000;letter-spacing:0.107px;">23/04/2018</span>
<span style="left:678.30px;top:361px;font-size:11px;line-height:13px;color:#000;letter-spacing:-0.252px;">12:00</span>
<span style="left:732.00px;top:361px;font-size:11px;line-height:13px;color:#000;">4</span>
<span style="left:743.30px;top:361px;font-size:11px;line-height:13px;color:#000;letter-spacing:-0.262px;">On Air</span>
<span style="left:774.40px;top:361px;font-size:11px;line-height:13px;color:#000;letter-spacing:0.494px;">...</span>
<span style="left:793.30px;top:361px;font-size:11px;line-height:13px;color:#000;letter-spacing:-0.262px;">On Air</span>
<span style="left:824.60px;top:361px;font-size:11px;line-height:13px;color:#000;letter-spacing:0.494px;">...</span>
<span style="left:859.50px;top:361px;font-size:11px;line-height:13px;color:#000;letter-spacing:-0.025px;">233.98</span>
<span style="left:924.60px;top:361px;font-size:11px;line-height:13px;color:#000;letter-spacing:-0.025px;">233.98</span>
<span style="left:963.30px;top:361px;font-size:11px;line-height:13px;color:#000;letter-spacing:-0.765px;">Alamo</span>
<span style="left:1038.30px;top:361px;font-size:11px;line-height:13px;color:#000;letter-spacing:-0.709px;">yes</span>
<span style="left:1063.30px;top:361px;font-size:11px;line-height:13px;color:#000;letter-spacing:0.003px;">auto</span>
<span style="left:8.30px;top:376px;font-size:11px;line-height:13px;color:#000;letter-spacing:-0.788px;">MUSTANG CONV OR</span>
<span style="left:110.30px;top:376px;font-size:11px;line-height:13px;color:#000;letter-spacing:0.494px;">...</span>
<span style="left:142.00px;top:376px;font-size:11px;line-height:13px;color:#000;">4</span>
<span style="left:153.30px;top:376px;font-size:11px;line-height:13px;color:#000;letter-spacing:-0.130px;">Convertible(Standard) - Gold</span>
<span style="left:353.30px;top:376px;font-size:11px;line-height:13px;color:#000;letter-spacing:-0.284px;">Flexible Car</span>
<span style="left:410.30px;top:376px;font-size:11px;line-height:13px;color:#000;letter-spacing:0.494px;">...</span>
<span style="left:428.30px;top:376px;font-size:11px;line-height:13px;color:#000;letter-spacing:-0.818px;">Thu</span>
<span style="left:463.30px;top:376px;font-size:11px;line-height:13px;color:#000;letter-spacing:-0.037px;">19/04/2018</span>
<span style="left:533.30px;top:376px;font-size:11px;line-height:13px;color:#000;letter-spacing:-0.252px;">12:00</span>
<span style="left:573.30px;top:376px;font-size:11px;line-height:13px;color:#000;letter-spacing:-0.850px;">Mon</span>
<span style="left:608.30px;top:376px;font-size:11px;line-height:13px;color:#000;letter-spacing:0.107px;">23/04/2018</span>
<span style="left:678.30px;top:376px;font-size:11px;line-height:13px;color:#000;letter-spacing:-0.252px;">12:00</span>
<span style="left:732.00px;top:376px;font-size:11px;line-height:13px;color:#000;">4</span>
<span style="left:743.30px;top:376px;font-size:11px;line-height:13px;color:#000;letter-spacing:-0.262px;">On Air</span>
<span style="left:774.40px;top:376px;font-size:11px;line-height:13px;color:#000;letter-spacing:0.494px;">...</span>
<span style="left:793.30px;top:376px;font-size:11px;line-height:13px;color:#000;letter-spacing:-0.262px;">On Air</span>
<span style="left:824.60px;top:376px;font-size:11px;line-height:13px;color:#000;letter-spacing:0.494px;">...</span>
<span style="left:859.50px;top:376px;font-size:11px;line-height:13px;color:#000;letter-spacing:-0.025px;">238.72</span>
<span style="left:924.60px;top:376px;font-size:11px;line-height:13px;color:#000;letter-spacing:-0.025px;">238.72</span>
<span style="left:963.30px;top:376px;font-size:11px;line-height:13px;color:#000;letter-spacing:-0.765px;">Alamo</span>
<span style="left:1038.30px;top:376px;font-size:11px;line-height:13px;color:#000;letter-spacing:-0.709px;">yes</span>
<span style="left:1063.30px;top:376px;font-size:11px;line-height:13px;color:#000;letter-spacing:0.003px;">auto</span>
<span style="left:8.30px;top:391px;font-size:11px;line-height:13px;color:#000;letter-spacing:-0.788px;">MUSTANG CONV OR</span>
<span style="left:110.30px;top:391px;font-size:11px;line-height:13px;color:#000;letter-spacing:0.494px;">...</span>
<span style="left:142.00px;top:391px;font-size:11px;line-height:13px;color:#000;">4</span>
<span style="left:153.30px;top:391px;font-size:11px;line-height:13px;color:#000;letter-spacing:-0.167px;">Convertible(Standard) - Gold - Plus Ex</span>
<span style="left:336.40px;top:391px;font-size:11px;line-height:13px;color:#000;letter-spacing:0.494px;">...</span>
<span style="left:353.30px;top:391px;font-size:11px;line-height:13px;color:#000;letter-spacing:-0.284px;">Flexible Car</span>
<span style="left:410.30px;top:391px;font-size:11px;line-height:13px;color:#000;letter-spacing:0.494px;">...</span>
<span style="left:428.30px;top:391px;font-size:11px;line-height:13px;color:#000;letter-spacing:-0.818px;">Thu</span>
<span style="left:463.30px;top:391px;font-size:11px;line-height:13px;color:#000;letter-spacing:-0.037px;">19/04/2018</span>
<span style="left:533.30px;top:391px;font-size:11px;line-height:13px;color:#000;letter-spacing:-0.252px;">12:00</span>
<span style="left:573.30px;top:391px;font-size:11px;line-height:13px;color:#000;letter-spacing:-0.850px;">Mon</span>
<span style="left:608.30px;top:391px;font-size:11px;line-height:13px;color:#000;letter-spacing:0.107px;">23/04/2018</span>
<span style="left:678.30px;top:391px;font-size:11px;line-height:13px;color:#000;letter-spacing:-0.252px;">12:00</span>
<span style="left:732.00px;top:391px;font-size:11px;line-height:13px;color:#000;">4</span>
<span style="left:743.30px;top:391px;font-size:11px;line-height:13px;color:#000;letter-spacing:-0.262px;">On Air</span>
<span style="left:774.40px;top:391px;font-size:11px;line-height:13px;color:#000;letter-spacing:0.494px;">...</span>
<span style="left:793.30px;top:391px;font-size:11px;line-height:13px;color:#000;letter-spacing:-0.262px;">On Air</span>
<span style="left:824.60px;top:391px;font-size:11px;line-height:13px;color:#000;letter-spacing:0.494px;">...</span>
<span style="left:859.50px;top:391px;font-size:11px;line-height:13px;color:#000;letter-spacing:-0.025px;">248.52</span>
<span style="left:924.60px;top:391px;font-size:11px;line-height:13px;color:#000;letter-spacing:-0.025px;">248.52</span>
<span style="left:963.30px;top:391px;font-size:11px;line-height:13px;color:#000;letter-spacing:-0.765px;">Alamo</span>
<span style="left:1038.30px;top:391px;font-size:11px;line-height:13px;color:#000;letter-spacing:-0.709px;">yes</span>
<span style="left:1063.30px;top:391px;font-size:11px;line-height:13px;color:#000;letter-spacing:0.003px;">auto</span>
<span style="left:8.30px;top:406px;font-size:11px;line-height:13px;color:#000;letter-spacing:-0.788px;">MUSTANG CONV OR</span>
<span style="left:110.30px;top:406px;font-size:11px;line-height:13px;color:#000;letter-spacing:0.494px;">...</span>
<span style="left:142.00px;top:406px;font-size:11px;line-height:13px;color:#000;">4</span>
<span style="left:153.30px;top:406px;font-size:11px;line-height:13px;color:#000;letter-spacing:-0.137px;">Convertible(Standard) - Inclusive GPS</span>
<span style="left:353.30px;top:406px;font-size:11px;line-height:13px;color:#000;letter-spacing:-0.284px;">Flexible Car</span>
<span style="left:410.30px;top:406px;font-size:11px;line-height:13px;color:#000;letter-spacing:0.494px;">...</span>
<span style="left:428.30px;top:406px;font-size:11px;line-height:13px;color:#000;letter-spacing:-0.818px;">Thu</span>
<span style="left:463.30px;top:406px;font-size:11px;line-height:13px;color:#000;letter-spacing:-0.037px;">19/04/2018</span>
<span style="left:533.30px;top:406px;font-size:11px;line-height:13px;color:#000;letter-spacing:-0.252px;">12:00</span>
<span style="left:573.30px;top:406px;font-size:11px;line-height:13px;color:#000;letter-spacing:-0.850px;">Mon</span>
<span style="left:608.30px;top:406px;font-size:11px;line-height:13px;color:#000;letter-spacing:0.107px;">23/04/2018</span>
<span style="left:678.30px;top:406px;font-size:11px;line-height:13px;color:#000;letter-spacing:-0.252px;">12:00</span>
<span style="left:732.00px;top:406px;font-size:11px;line-height:13px;color:#000;">4</span>
<span style="left:743.30px;top:406px;font-size:11px;line-height:13px;color:#000;letter-spacing:-0.262px;">On Air</span>
<span style="left:774.40px;top:406px;font-size:11px;line-height:13px;color:#000;letter-spacing:0.494px;">...</span>
<span style="left:793.30px;top:406px;font-size:11px;line-height:13px;color:#000;letter-spacing:-0.262px;">On Air</span>
<span style="left:824.60px;top:406px;font-size:11px;line-height:13px;color:#000;letter-spacing:0.494px;">...</span>
<span style="left:859.50px;top:406px;font-size:11px;line-height:13px;color:#000;letter-spacing:-0.025px;">260.52</span>
<span style="left:924.60px;top:406px;font-size:11px;line-height:13px;color:#000;letter-spacing:-0.025px;">260.52</span>
<span style="left:963.30px;top:406px;font-size:11px;line-height:13px;color:#000;letter-spacing:-0.765px;">Alamo</span>
<span style="left:1038.30px;top:406px;font-size:11px;line-height:13px;color:#000;letter-spacing:-0.709px;">yes</span>
<span style="left:1063.30px;top:406px;font-size:11px;line-height:13px;color:#000;letter-spacing:0.003px;">auto</span>
<span style="left:8.30px;top:421px;font-size:11px;line-height:13px;color:#000;letter-spacing:-0.788px;">MUSTANG CONV OR</span>
<span style="left:110.30px;top:421px;font-size:11px;line-height:13px;color:#000;letter-spacing:0.494px;">...</span>
<span style="left:142.00px;top:421px;font-size:11px;line-height:13px;color:#000;">4</span>
<span style="left:153.30px;top:421px;font-size:11px;line-height:13px;color:#000;letter-spacing:-0.137px;">Convertible(Standard) - Inclusive GPS</span>
<span style="left:335.60px;top:421px;font-size:11px;line-height:13px;color:#000;letter-spacing:0.494px;">...</span>
<span style="left:353.30px;top:421px;font-size:11px;line-height:13px;color:#000;letter-spacing:-0.284px;">Flexible Car</span>
<span style="left:410.30px;top:421px;font-size:11px;line-height:13px;color:#000;letter-spacing:0.494px;">...</span>
<span style="left:428.30px;top:421px;font-size:11px;line-height:13px;color:#000;letter-spacing:-0.818px;">Thu</span>
<span style="left:463.30px;top:421px;font-size:11px;line-height:13px;color:#000;letter-spacing:-0.037px;">19/04/2018</span>
<span style="left:533.30px;top:421px;font-size:11px;line-height:13px;color:#000;letter-spacing:-0.252px;">12:00</span>
<span style="left:573.30px;top:421px;font-size:11px;line-height:13px;color:#000;letter-spacing:-0.850px;">Mon</span>
<span style="left:608.30px;top:421px;font-size:11px;line-height:13px;color:#000;letter-spacing:0.107px;">23/04/2018</span>
<span style="left:678.30px;top:421px;font-size:11px;line-height:13px;color:#000;letter-spacing:-0.252px;">12:00</span>
<span style="left:732.00px;top:421px;font-size:11px;line-height:13px;color:#000;">4</span>
<span style="left:743.30px;top:421px;font-size:11px;line-height:13px;color:#000;letter-spacing:-0.262px;">On Air</span>
<span style="left:774.40px;top:421px;font-size:11px;line-height:13px;color:#000;letter-spacing:0.494px;">...</span>
<span style="left:793.30px;top:421px;font-size:11px;line-height:13px;color:#000;letter-spacing:-0.262px;">On Air</span>
<span style="left:824.60px;top:421px;font-size:11px;line-height:13px;color:#000;letter-spacing:0.494px;">...</span>
<span style="left:859.50px;top:421px;font-size:11px;line-height:13px;color:#000;letter-spacing:-0.025px;">270.33</span>
<span style="left:924.60px;top:421px;font-size:11px;line-height:13px;color:#000;letter-spacing:-0.025px;">270.33</span>
<span style="left:963.30px;top:421px;font-size:11px;line-height:13px;color:#000;letter-spacing:-0.765px;">Alamo</span>
<span style="left:1038.30px;top:421px;font-size:11px;line-height:13px;color:#000;letter-spacing:-0.709px;">yes</span>
<span style="left:1063.30px;top:421px;font-size:11px;line-height:13px;color:#000;letter-spacing:0.003px;">auto</span>
<span style="left:8.30px;top:436px;font-size:11px;line-height:13px;color:#000;letter-spacing:-0.788px;">MUSTANG CONV OR</span>
<span style="left:110.30px;top:436px;font-size:11px;line-height:13px;color:#000;letter-spacing:0.494px;">...</span>
<span style="left:142.00px;top:436px;font-size:11px;line-height:13px;color:#000;">4</span>
<span style="left:153.30px;top:436px;font-size:11px;line-height:13px;color:#000;letter-spacing:-0.238px;">Convertible(Standard) - Gold GPS</span>
<span style="left:353.30px;top:436px;font-size:11px;line-height:13px;color:#000;letter-spacing:-0.284px;">Flexible Car</span>
<span style="left:410.30px;top:436px;font-size:11px;line-height:13px;color:#000;letter-spacing:0.494px;">...</span>
<span style="left:428.30px;top:436px;font-size:11px;line-height:13px;color:#000;letter-spacing:-0.818px;">Thu</span>
<span style="left:463.30px;top:436px;font-size:11px;line-height:13px;color:#000;letter-spacing:-0.037px;">19/04/2018</span>
<span style="left:533.30px;top:436px;font-size:11px;line-height:13px;color:#000;letter-spacing:-0.252px;">12:00</span>
<span style="left:573.30px;top:436px;font-size:11px;line-height:13px;color:#000;letter-spacing:-0.850px;">Mon</span>
<span style="left:608.30px;top:436px;font-size:11px;line-height:13px;color:#000;letter-spacing:0.107px;">23/04/2018</span>
<span style="left:678.30px;top:436px;font-size:11px;line-height:13px;color:#000;letter-spacing:-0.252px;">12:00</span>
<span style="left:732.00px;top:436px;font-size:11px;line-height:13px;color:#000;">4</span>
<span style="left:743.30px;top:436px;font-size:11px;line-height:13px;color:#000;letter-spacing:-0.262px;">On Air</span>
<span style="left:774.40px;top:436px;font-size:11px;line-height:13px;color:#000;letter-spacing:0.494px;">...</span>
<span style="left:793.30px;top:436px;font-size:11px;line-height:13px;color:#000;letter-spacing:-0.262px;">On Air</span>
<span style="left:824.60px;top:436px;font-size:11px;line-height:13px;color:#000;letter-spacing:0.494px;">...</span>
<span style="left:859.50px;top:436px;font-size:11px;line-height:13px;color:#000;letter-spacing:-0.025px;">275.07</span>
<span style="left:924.60px;top:436px;font-size:11px;line-height:13px;color:#000;letter-spacing:-0.025px;">275.07</span>
<span style="left:963.30px;top:436px;font-size:11px;line-height:13px;color:#000;letter-spacing:-0.765px;">Alamo</span>
<span style="left:1038.30px;top:436px;font-size:11px;line-height:13px;color:#000;letter-spacing:-0.709px;">yes</span>
<span style="left:1063.30px;top:436px;font-size:11px;line-height:13px;color:#000;letter-spacing:0.003px;">auto</span>
<span style="left:8.30px;top:451px;font-size:11px;line-height:13px;color:#000;letter-spacing:-0.788px;">MUSTANG CONV OR</span>
<span style="left:110.30px;top:451px;font-size:11px;line-height:13px;color:#000;letter-spacing:0.494px;">...</span>
<span style="left:142.00px;top:451px;font-size:11px;line-height:13px;color:#000;">4</span>
<span style="left:153.30px;top:451px;font-size:11px;line-height:13px;color:#000;letter-spacing:-0.226px;">Convertible(Standard) - Gold GPS - Pl</span>
<span style="left:332.30px;top:451px;font-size:11px;line-height:13px;color:#000;letter-spacing:0.494px;">...</span>
<span style="left:353.30px;top:451px;font-size:11px;line-height:13px;color:#000;letter-spacing:-0.284px;">Flexible Car</span>
<span style="left:410.30px;top:451px;font-size:11px;line-height:13px;color:#000;letter-spacing:0.494px;">...</span>
<span style="left:428.30px;top:451px;font-size:11px;line-height:13px;color:#000;letter-spacing:-0.818px;">Thu</span>
<span style="left:463.30px;top:451px;font-size:11px;line-height:13px;color:#000;letter-spacing:-0.037px;">19/04/2018</span>
<span style="left:533.30px;top:451px;font-size:11px;line-height:13px;color:#000;letter-spacing:-0.252px;">12:00</span>
<span style="left:573.30px;top:451px;font-size:11px;line-height:13px;color:#000;letter-spacing:-0.850px;">Mon</span>
<span style="left:608.30px;top:451px;font-size:11px;line-height:13px;color:#000;letter-spacing:0.107px;">23/04/2018</span>
<span style="left:678.30px;top:451px;font-size:11px;line-height:13px;color:#000;letter-spacing:-0.252px;">12:00</span>
<span style="left:732.00px;top:451px;font-size:11px;line-height:13px;color:#000;">4</span>
<span style="left:743.30px;top:451px;font-size:11px;line-height:13px;color:#000;letter-spacing:-0.262px;">On Air</span>
<span style="left:774.40px;top:451px;font-size:11px;line-height:13px;color:#000;letter-spacing:0.494px;">...</span>
<span style="left:793.30px;top:451px;font-size:11px;line-height:13px;color:#000;letter-spacing:-0.262px;">On Air</span>
<span style="left:824.60px;top:451px;font-size:11px;line-height:13px;color:#000;letter-spacing:0.494px;">...</span>
<span style="left:859.50px;top:451px;font-size:11px;line-height:13px;color:#000;letter-spacing:-0.025px;">284.87</span>
<span style="left:924.60px;top:451px;font-size:11px;line-height:13px;color:#000;letter-spacing:-0.025px;">284.87</span>
<span style="left:963.30px;top:451px;font-size:11px;line-height:13px;color:#000;letter-spacing:-0.765px;">Alamo</span>
<span style="left:1038.30px;top:451px;font-size:11px;line-height:13px;color:#000;letter-spacing:-0.709px;">yes</span>
<span style="left:1063.30px;top:451px;font-size:11px;line-height:13px;color:#000;letter-spacing:0.003px;">auto</span>
<span style="left:8.30px;top:466px;font-size:11px;line-height:13px;color:#000;letter-spacing:-0.788px;">MUSTANG CONV OR</span>
<span style="left:110.30px;top:466px;font-size:11px;line-height:13px;color:#000;letter-spacing:0.494px;">...</span>
<span style="left:142.00px;top:466px;font-size:11px;line-height:13px;color:#000;">4</span>
<span style="left:153.30px;top:466px;font-size:11px;line-height:13px;color:#000;letter-spacing:-0.063px;">Convertible(Standard) - Young Driver</span>
<span style="left:336.40px;top:466px;font-size:11px;line-height:13px;color:#000;letter-spacing:0.494px;">...</span>
<span style="left:353.30px;top:466px;font-size:11px;line-height:13px;color:#000;letter-spacing:-0.284px;">Flexible Car</span>
<span style="left:410.30px;top:466px;font-size:11px;line-height:13px;color:#000;letter-spacing:0.494px;">...</span>
<span style="left:428.30px;top:466px;font-size:11px;line-height:13px;color:#000;letter-spacing:-0.818px;">Thu</span>
<span style="left:463.30px;top:466px;font-size:11px;line-height:13px;color:#000;letter-spacing:-0.037px;">19/04/2018</span>
<span style="left:533.30px;top:466px;font-size:11px;line-height:13px;color:#000;letter-spacing:-0.252px;">12:00</span>
<span style="left:573.30px;top:466px;font-size:11px;line-height:13px;color:#000;letter-spacing:-0.850px;">Mon</span>
<span style="left:608.30px;top:466px;font-size:11px;line-height:13px;color:#000;letter-spacing:0.107px;">23/04/2018</span>
<span style="left:678.30px;top:466px;font-size:11px;line-height:13px;color:#000;letter-spacing:-0.252px;">12:00</span>
<span style="left:732.00px;top:466px;font-size:11px;line-height:13px;color:#000;">4</span>
<span style="left:743.30px;top:466px;font-size:11px;line-height:13px;color:#000;letter-spacing:-0.262px;">On Air</span>
<span style="left:774.40px;top:466px;font-size:11px;line-height:13px;color:#000;letter-spacing:0.494px;">...</span>
<span style="left:793.30px;top:466px;font-size:11px;line-height:13px;color:#000;letter-spacing:-0.262px;">On Air</span>
<span style="left:824.60px;top:466px;font-size:11px;line-height:13px;color:#000;letter-spacing:0.494px;">...</span>
<span style="left:860.30px;top:466px;font-size:11px;line-height:13px;color:#000;letter-spacing:-0.022px;">311.41</span>
<span style="left:925.40px;top:466px;font-size:11px;line-height:13px;color:#000;letter-spacing:-0.022px;">311.41</span>
<span style="left:963.30px;top:466px;font-size:11px;line-height:13px;color:#000;letter-spacing:-0.765px;">Alamo</span>
<span style="left:1038.30px;top:466px;font-size:11px;line-height:13px;color:#000;letter-spacing:-0.709px;">yes</span>
<span style="left:1063.30px;top:466px;font-size:11px;line-height:13px;color:#000;letter-spacing:0.003px;">auto</span>
<span style="left:8.30px;top:481px;font-size:11px;line-height:13px;color:#000;letter-spacing:-0.788px;">MUSTANG CONV OR</span>
<span style="left:110.30px;top:481px;font-size:11px;line-height:13px;color:#000;letter-spacing:0.494px;">...</span>
<span style="left:142.00px;top:481px;font-size:11px;line-height:13px;color:#000;">4</span>
<span style="left:153.30px;top:481px;font-size:11px;line-height:13px;color:#000;letter-spacing:-0.063px;">Convertible(Standard) - Young Driver</span>
<span style="left:336.40px;top:481px;font-size:11px;line-height:13px;color:#000;letter-spacing:0.494px;">...</span>
<span style="left:353.30px;top:481px;font-size:11px;line-height:13px;color:#000;letter-spacing:-0.284px;">Flexible Car</span>
<span style="left:410.30px;top:481px;font-size:11px;line-height:13px;color:#000;letter-spacing:0.494px;">...</span>
<span style="left:428.30px;top:481px;font-size:11px;line-height:13px;color:#000;letter-spacing:-0.818px;">Thu</span>
<span style="left:463.30px;top:481px;font-size:11px;line-height:13px;color:#000;letter-spacing:-0.037px;">19/04/2018</span>
<span style="left:533.30px;top:481px;font-size:11px;line-height:13px;color:#000;letter-spacing:-0.252px;">12:00</span>
<span style="left:573.30px;top:481px;font-size:11px;line-height:13px;color:#000;letter-spacing:-0.850px;">Mon</span>
<span style="left:608.30px;top:481px;font-size:11px;line-height:13px;color:#000;letter-spacing:0.107px;">23/04/2018</span>
<span style="left:678.30px;top:481px;font-size:11px;line-height:13px;color:#000;letter-spacing:-0.252px;">12:00</span>
<span style="left:732.00px;top:481px;font-size:11px;line-height:13px;color:#000;">4</span>
<span style="left:743.30px;top:481px;font-size:11px;line-height:13px;color:#000;letter-spacing:-0.262px;">On Air</span>
<span style="left:774.40px;top:481px;font-size:11px;line-height:13px;color:#000;letter-spacing:0.494px;">...</span>
<span style="left:793.30px;top:481px;font-size:11px;line-height:13px;color:#000;letter-spacing:-0.262px;">On Air</span>
<span style="left:824.60px;top:481px;font-size:11px;line-height:13px;color:#000;letter-spacing:0.494px;">...</span>
<span style="left:859.50px;top:481px;font-size:11px;line-height:13px;color:#000;letter-spacing:-0.025px;">321.21</span>
<span style="left:924.60px;top:481px;font-size:11px;line-height:13px;color:#000;letter-spacing:-0.025px;">321.21</span>
<span style="left:963.30px;top:481px;font-size:11px;line-height:13px;color:#000;letter-spacing:-0.765px;">Alamo</span>
<span style="left:1038.30px;top:481px;font-size:11px;line-height:13px;color:#000;letter-spacing:-0.709px;">yes</span>
<span style="left:1063.30px;top:481px;font-size:11px;line-height:13px;color:#000;letter-spacing:0.003px;">auto</span>
<span style="left:9.20px;top:737px;font-size:11px;line-height:13px;color:#000;letter-spacing:-0.005px;">First portion: 51.4 sec, total search time: 51.4 sec</span>
<span style="left:1355.60px;top:735px;font-size:16px;line-height:17px;color:#0845A5;font-family:'Liberation Serif',serif;font-weight:bold;">i</span>
<span style="left:5.20px;top:762px;font-size:11px;line-height:13px;color:#000;letter-spacing:-0.660px;">Summary</span>
<span style="left:57.40px;top:762px;font-size:11px;line-height:13px;color:#000;letter-spacing:-0.507px;">Search</span>
<span style="left:98.50px;top:762px;font-size:11px;line-height:13px;color:#000;letter-spacing:-0.573px;">Acc 2A LAS</span>
<span style="left:160.60px;top:762px;font-size:11px;line-height:13px;color:#000;letter-spacing:-0.723px;">Car LAS</span>
<span style="left:206.60px;top:762px;font-size:11px;line-height:13px;color:#000;letter-spacing:-0.295px;">Tour 2A</span>
<span style="left:252.70px;top:762px;font-size:11px;line-height:13px;color:#000;letter-spacing:-0.573px;">Acc 2A LAS</span>
<span style="left:314.80px;top:762px;font-size:11px;line-height:13px;color:#fff;letter-spacing:-0.723px;">Car LAS</span>
<span style="left:360.80px;top:762px;font-size:11px;line-height:13px;color:#000;letter-spacing:-0.295px;">Tour 2A</span>
<span style="left:406.30px;top:762px;font-size:11px;line-height:13px;color:#000;letter-spacing:-0.452px;">Financial Summary</span>
<span style="left:576.80px;top:786px;font-size:11px;line-height:13px;color:#000;letter-spacing:-0.021px;">User: 535 - Ajay Hunter</span>
<span style="left:703.10px;top:786px;font-size:11px;line-height:13px;color:#000;letter-spacing:-0.105px;">Retailer: &#x27;Ocean-Florida&#x27;</span>
<span style="left:829.50px;top:786px;font-size:11px;line-height:13px;color:#000;letter-spacing:-0.090px;">Client: none</span>
<span style="left:1327.00px;top:786px;font-size:11px;line-height:13px;color:#000;letter-spacing:-0.575px;">18:20 GMT</span>
<span style="left:1317.90px;top:819px;font-size:11px;line-height:13px;color:#000;letter-spacing:-0.127px;">18:20</span>
<span style="left:1303.30px;top:835px;font-size:11px;line-height:13px;color:#000;letter-spacing:0.063px;">28/06/2017</span>
</div>
</body></html>
